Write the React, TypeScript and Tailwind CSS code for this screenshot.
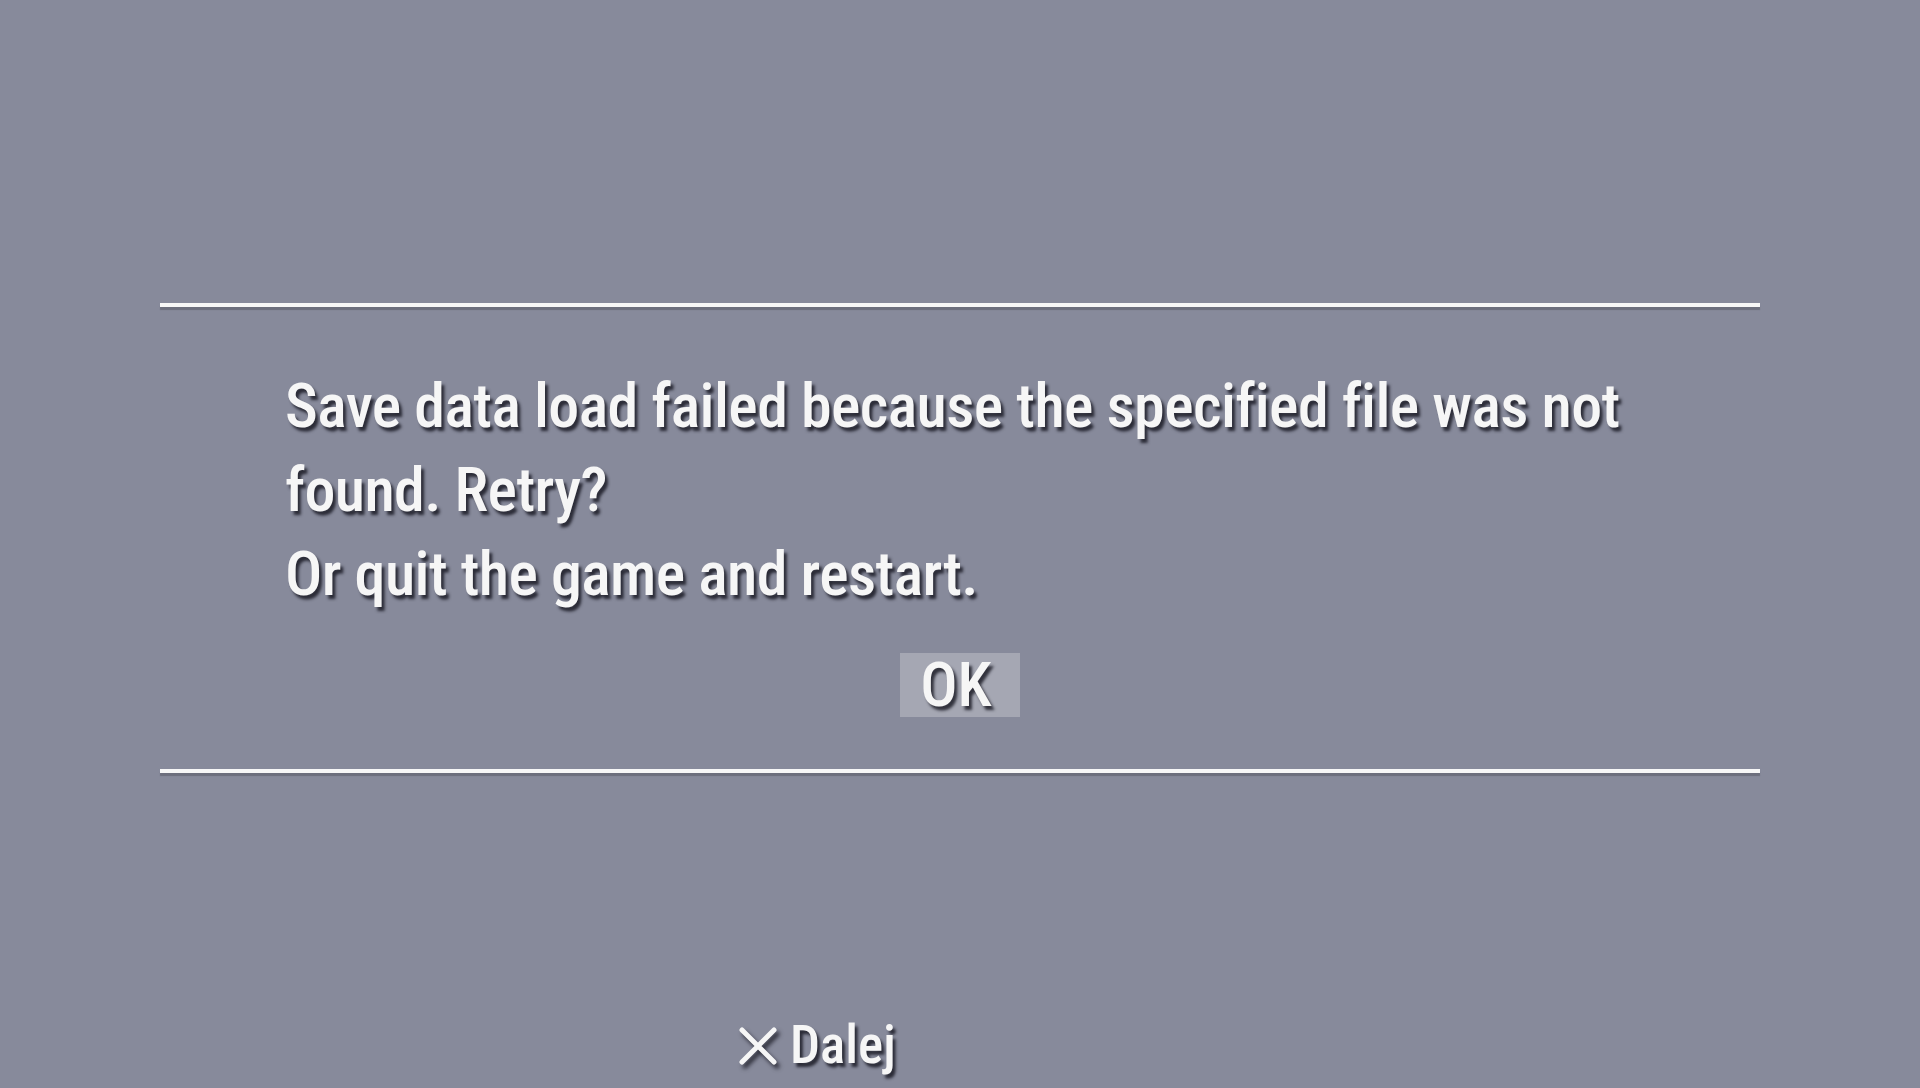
export default function App() {
  const shadow = "[text-shadow:3px_4px_3px_rgba(20,20,30,0.8)]";
  return (
    <div className="w-[1920px] h-[1088px] overflow-hidden bg-[#878a9b] flex flex-col pt-[303px] font-['Roboto',sans-serif] [font-stretch:condensed] font-medium text-[#f6f6f6]">
      <div className="mx-[160px] h-[4px] bg-[#f7f7f7] shadow-[0_3px_1px_rgba(60,60,70,0.35)]" />

      <p className={`ml-[285px] mt-[57px] text-[62px] leading-[84px] tracking-[-0.6px] ${shadow}`}>
        Save data load failed because the specified file was not
        <br />
        found. Retry?
        <br />
        Or quit the game and restart.
      </p>

      <button
        className={`mx-auto mt-[37px] w-[120px] h-[64px] bg-[#a5a7b3] flex items-center justify-center pr-[8px] text-[62px] leading-none ${shadow}`}
      >
        OK
      </button>

      <div className="mx-[160px] mt-[52px] h-[4px] bg-[#f7f7f7] shadow-[0_3px_1px_rgba(60,60,70,0.35)]" />

      <div className="mt-[246px] ml-[738px] flex items-center gap-[12px] h-[53px]">
        <svg
          width="40"
          height="40"
          viewBox="0 0 40 40"
          className="[filter:drop-shadow(3px_4px_2px_rgba(20,20,30,0.8))]"
        >
          <path d="M4 4 L36 36 M36 4 L4 36" stroke="#f6f6f6" strokeWidth="5" strokeLinecap="round" />
        </svg>
        <span className={`text-[53px] leading-none ${shadow}`}>Dalej</span>
      </div>
    </div>
  );
}
